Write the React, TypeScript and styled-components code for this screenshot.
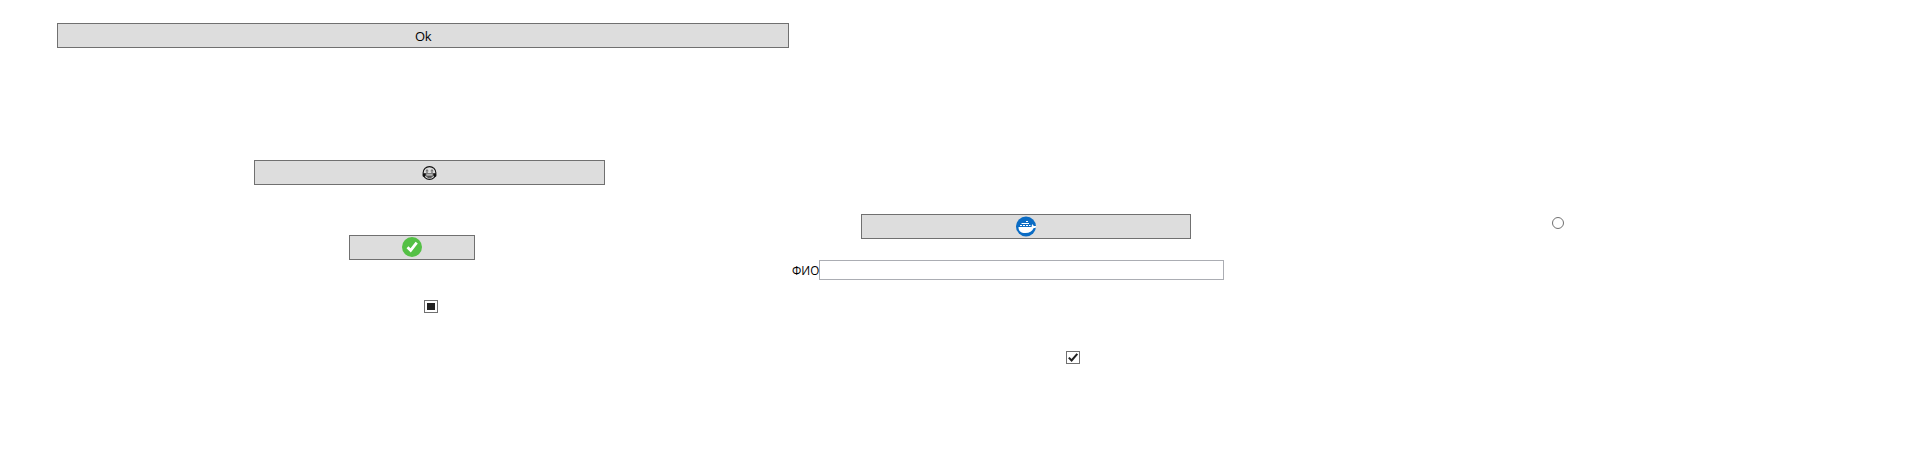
import React from 'react';
import styled, { createGlobalStyle } from 'styled-components';

const GlobalStyle = createGlobalStyle`
  * { box-sizing: border-box; }
  body {
    margin: 0;
    background: #fff;
    color: #000;
    font: 13px/16px "Open Sans", "Noto Sans", sans-serif;
  }
`;

const Window = styled.main`
  display: grid;
  grid-template-columns: 792px 432px 1fr;
  height: 464px;
`;

const Column = styled.section<{ $top: number }>`
  display: flex;
  flex-direction: column;
  align-items: flex-start;
  padding-top: ${p => p.$top}px;
`;

const Button = styled.button<{ $width: number; $left: number; $top?: number }>`
  display: flex;
  align-items: center;
  justify-content: center;
  width: ${p => p.$width}px;
  height: 25px;
  margin: ${p => p.$top ?? 0}px 0 0 ${p => p.$left}px;
  padding: 0;
  border: 1px solid #707070;
  border-radius: 0;
  background: #ddd;
  color: #000;
  font: inherit;
`;

const Caption = styled.span`
  padding-top: 1px;
  letter-spacing: -0.5px;
`;

const Field = styled.label`
  display: flex;
  width: 432px;
  height: 20px;
  margin-top: 21px;
`;

const FieldName = styled.span`
  width: 27px;
  padding-top: 2px;
  white-space: nowrap;
  transform: scaleX(0.9);
  transform-origin: left;
`;

const TextBox = styled.input`
  flex: 1;
  min-width: 0;
  height: 20px;
  padding: 0 3px;
  border: 1px solid #abadb3;
  border-radius: 0;
  background: #fff;
  font: inherit;
`;

const CheckBox = styled.span<{ $left: number; $top: number }>`
  display: flex;
  align-items: center;
  justify-content: center;
  width: 14px;
  height: 13px;
  margin: ${p => p.$top}px 0 0 ${p => p.$left}px;
  border: 1px solid #707070;
  background: #fff;
`;

const Indeterminate = styled.span`
  width: 8px;
  height: 7px;
  background: #212121;
`;

const Radio = styled.span`
  width: 12px;
  height: 12px;
  margin-left: 328px;
  border: 1px solid #707070;
  border-radius: 50%;
  background: #fff;
`;

const AcceptGlyph = styled.svg`
  margin-bottom: 1px;
`;

const LaughIcon = () => (
  <svg width="15" height="15" viewBox="0 -0.600 15 15" fill="none" stroke="#111">
    <circle cx="7.5" cy="7.4" r="6.4" strokeWidth="1.1" />
    <path d="M3.800 5.200 5 4.200l1.300 1M8.700 5.200l1.300-1 1.200 1M4 6.400h2M9 6.400h2" strokeWidth=".7" />
    <path d="M3.600 8.200h7.800c-.3 2.600-1.700 3.800-3.900 3.800S3.900 10.800 3.600 8.200z" strokeWidth=".7" />
    <path d="M4.200 9.900h6.600c-.6 1.300-1.700 1.900-3.300 1.900s-2.700-.6-3.300-1.900z" fill="#555" stroke="none" />
    <path d="M1 7.800l2.600-.3v2.900c-.4 1-2.600 1.200-3 0-.2-.8 0-1.900.4-2.600zM14 7.800l-2.600-.3v2.900c.4 1 2.600 1.200 3 0 .2-.8 0-1.900-.4-2.600z" fill="#111" stroke="none" />
  </svg>
);

const SuccessIcon = () => (
  <AcceptGlyph width="20" height="20" viewBox="0 0 20 20">
    <circle cx="10" cy="10" r="10" fill="#54c045" />
    <path d="m5.500 10.200 3.200 3.200 6-7.700" fill="none" stroke="#fff" strokeWidth="2.800" />
  </AcceptGlyph>
);

const WhaleIcon = () => (
  <svg width="20" height="21" viewBox="0 0 20 21">
    <circle cx="10" cy="10.500" r="10" fill="#0b6cc4" />
    <path d="M2.500 11h13c.5-.8.100-1.900.6-2.700 1 .4 1.400 1 1.500 1.700H20v1.400c-.5.500-1.400.6-2.300.6-1.500 3.500-4.200 5-8.300 5-4.600 0-6.900-2-6.900-6z" fill="#fff" />
    <path d="M4 9h2v1H4zM7 9h2v1H7zM10 9h2v1h-2zM13 9h1.500v1H13zM5.500 7h7.500v1H5.500zM10 5h2v1h-2z" fill="#fff" />
  </svg>
);

const CheckMark = () => (
  <svg width="12" height="11" viewBox="0 0 12 11">
    <path d="m1.800 5.600 2.800 2.900L10.300 1.800" fill="none" stroke="#212121" strokeWidth="2" />
  </svg>
);

export default function App() {
  return (
    <>
      <GlobalStyle />
      <Window>
        <Column $top={23}>
          <Button $width={732} $left={57}><Caption>Ok</Caption></Button>
          <Button $width={351} $left={254} $top={112} aria-label="Laugh"><LaughIcon /></Button>
          <Button $width={126} $left={349} $top={50} aria-label="Accept"><SuccessIcon /></Button>
          <CheckBox $left={424} $top={40} role="checkbox" aria-checked="mixed"><Indeterminate /></CheckBox>
        </Column>
        <Column $top={214}>
          <Button $width={330} $left={69} aria-label="Docker"><WhaleIcon /></Button>
          <Field>
            <FieldName>ФИО</FieldName>
            <TextBox type="text" />
          </Field>
          <CheckBox $left={274} $top={71} role="checkbox" aria-checked="true"><CheckMark /></CheckBox>
        </Column>
        <Column $top={217}>
          <Radio role="radio" aria-checked="false" />
        </Column>
      </Window>
    </>
  );
}
